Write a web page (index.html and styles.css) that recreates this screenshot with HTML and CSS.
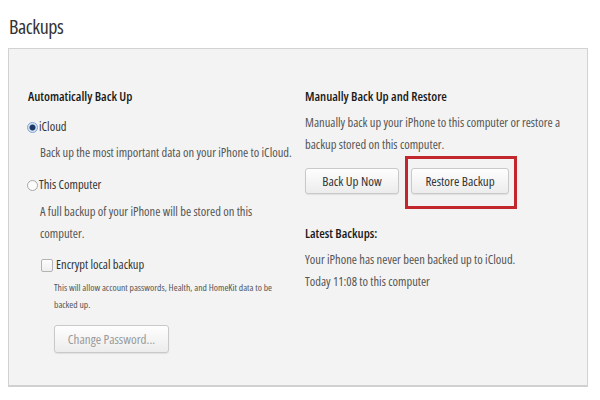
FILE: index.html
```html
<!DOCTYPE html>
<html lang="en">
<head>
<meta charset="utf-8">
<title>Backups</title>
<link rel="stylesheet" href="styles.css">
</head>
<body>
<h1 class="title">Backups</h1>
<section class="panel">
  <div class="col col-left">
    <h2 class="heading">Automatically Back Up</h2>
    <label class="option opt-icloud"><span class="radio checked"></span><span class="opt-label">iCloud</span></label>
    <p class="desc desc-icloud">Back up the most important data on your iPhone to iCloud.</p>
    <label class="option opt-computer"><span class="radio"></span><span class="opt-label">This Computer</span></label>
    <p class="desc desc-computer">A full backup of your iPhone will be stored on this computer.</p>
    <label class="check-row"><span class="checkbox"></span><span class="check-label">Encrypt local backup</span></label>
    <p class="small">This will allow account passwords, Health, and HomeKit data to be backed up.</p>
    <button class="btn btn-disabled">Change Password...</button>
  </div>
  <div class="col col-right">
    <h2 class="heading">Manually Back Up and Restore</h2>
    <p class="desc desc-manual">Manually back up your iPhone to this computer or restore a backup stored on this computer.</p>
    <div class="btn-row">
      <button class="btn btn-backup">Back Up Now</button>
      <span class="highlight-wrap"><button class="btn btn-restore">Restore Backup</button><span class="highlight"></span></span>
    </div>
    <h2 class="heading heading-latest">Latest Backups:</h2>
    <p class="desc desc-latest">Your iPhone has never been backed up to iCloud.<br>Today 11:08 to this computer</p>
  </div>
</section>
</body>
</html>
```
FILE: styles.css
```css
html,body{margin:0;padding:0;background:#fff;}
body{width:600px;height:400px;overflow:hidden;font-family:"Open Sans",sans-serif;font-stretch:75%;color:#555;}
.title{margin:0;padding:13px 0 0 9px;height:48px;box-sizing:border-box;font-size:20px;line-height:28px;font-weight:400;letter-spacing:-0.4px;color:#333;}
.panel{margin:0 12px 0 8px;height:339px;box-sizing:border-box;background:#f3f3f3;border:1px solid #d2d2d2;border-bottom:2px solid #d0d0d0;display:grid;grid-template-columns:277px 1fr;padding:36px 0 0 19px;}
.col{display:flex;flex-direction:column;align-items:flex-start;}
.heading{margin:0;font-size:12.8px;line-height:22px;font-weight:600;color:#1a1a1a;}
p{margin:0;}
.desc{font-size:12.5px;line-height:22px;color:#555;}
.option{display:flex;align-items:center;font-size:12.5px;line-height:22px;color:#333;margin-left:-1px;}
.opt-icloud{margin-top:9px;}
.opt-computer{margin-top:10px;}
.radio{width:9px;height:9px;border:1px solid #a8a8a8;border-radius:50%;background:#fbfbfb;margin-right:1px;box-sizing:content-box;}
.radio.checked{border-color:#7fa3cf;background:radial-gradient(circle,#1d3a66 0 2.6px,#cfe0f3 3.4px,#eaf2fb 100%);}
.desc-icloud{margin-top:4px;padding-left:12px;}
.desc-computer{margin-top:5px;padding-left:12px;width:230px;}
.check-row{display:flex;align-items:center;margin-top:9px;padding-left:13px;font-size:12.5px;line-height:22px;color:#333;}
.checkbox{width:10px;height:11px;border:1px solid #b3b3b3;border-radius:2px;background:linear-gradient(#fdfdfd,#eeeeee);margin-right:3px;}
.small{font-size:9.6px;line-height:17px;color:#555;padding-left:26px;width:240px;margin-top:3px;}
.btn{font-family:"Open Sans",sans-serif;font-stretch:75%;font-size:13px;color:#333;background:linear-gradient(#fefefe,#ececec);border:1px solid #c9c9c9;border-radius:3px;box-shadow:0 1px 1px rgba(0,0,0,0.08);padding:0;cursor:default;}
.btn-disabled{margin:12px 0 0 26px;width:115px;height:28px;color:#9a9a9a;}
.desc-manual{margin-top:5px;width:262px;}
.btn-row{display:flex;gap:12px;margin-top:12px;}
.btn-backup{width:94px;height:26px;}
.btn-restore{width:98px;height:26px;}
.highlight-wrap{position:relative;display:block;}
.highlight{position:absolute;left:-6px;right:-8px;top:-12px;bottom:-15px;border:3px solid #c1272d;pointer-events:none;}
.heading-latest{margin-top:28px;}
.desc-latest{margin-top:5px;}
```
